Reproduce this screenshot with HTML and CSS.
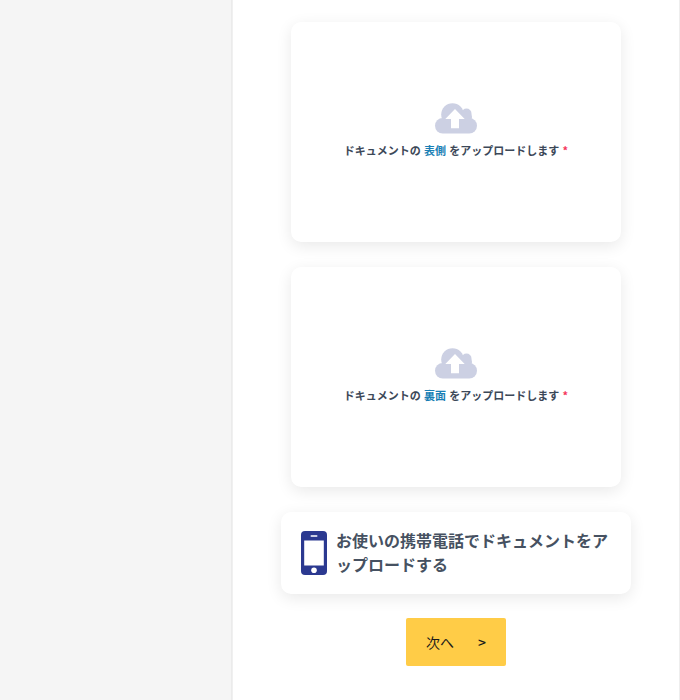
FILE: index.html
```html
<!DOCTYPE html>
<html lang="ja">
<head>
<meta charset="utf-8">
<title>アップロード</title>
<link rel="stylesheet" href="styles.css">
</head>
<body>
<div class="layout">
  <aside class="side"></aside>
  <main class="main">
    <div class="upload-card">
      <svg class="cloud" viewBox="0 0 44 33" aria-hidden="true"><g class="cloud-fill"><circle cx="18.500" cy="12.500" r="11.300"/><circle cx="32.500" cy="11.500" r="5"/><circle cx="32" cy="15" r="6"/><rect x="1" y="16" width="42" height="15.500" rx="7.700"/></g><path class="cloud-arrow" d="M21 7L30.700 17H25V26.300H17V17H11.300Z"/></svg>
      <p class="upload-text">ドキュメントの <span class="accent">表側</span> をアップロードします <span class="req">*</span></p>
    </div>
    <div class="upload-card">
      <svg class="cloud" viewBox="0 0 44 33" aria-hidden="true"><g class="cloud-fill"><circle cx="18.500" cy="12.500" r="11.300"/><circle cx="32.500" cy="11.500" r="5"/><circle cx="32" cy="15" r="6"/><rect x="1" y="16" width="42" height="15.500" rx="7.700"/></g><path class="cloud-arrow" d="M21 7L30.700 17H25V26.300H17V17H11.300Z"/></svg>
      <p class="upload-text">ドキュメントの <span class="accent">裏面</span> をアップロードします <span class="req">*</span></p>
    </div>
    <div class="phone-card">
      <svg class="phone" viewBox="0 0 26 44" aria-hidden="true"><rect class="phone-body" x="0" y="0" width="26" height="44" rx="4"/><rect class="phone-screen" x="3.200" y="9.500" width="19.600" height="25"/><rect class="phone-screen" x="9.500" y="4.300" width="7" height="1.500" rx="0.700"/><circle class="phone-screen" cx="13" cy="39.200" r="2.800"/></svg>
      <p class="phone-text">お使いの携帯電話でドキュメントをアップロードする</p>
    </div>
    <button class="next" type="button"><span>次へ</span><span class="chev">&gt;</span></button>
  </main>
</div>
</body>
</html>
```
FILE: styles.css
```css
* { box-sizing: border-box; }
html, body { margin: 0; height: 100%; overflow: hidden; }
body {
  background: #fff;
  font-family: "Noto Sans CJK JP", "Noto Sans", sans-serif;
  color: #3c4858;
}
.layout { display: flex; height: 700px; width: 680px; }
.side { width: 232px; flex: none; background: #f5f5f5; border-right: 1px solid #ebebeb; }
.main {
  flex: 1;
  background: #fff;
  border-left: 1px solid #f0f0f0;
  border-right: 1px solid #eeeeee;
  display: flex;
  flex-direction: column;
  align-items: center;
  padding-top: 22px;
}
.upload-card {
  width: 330px;
  height: 220px;
  flex: none;
  margin-bottom: 25px;
  background: #fff;
  border-radius: 10px;
  box-shadow: 0 4px 16px rgba(0, 0, 0, 0.09);
  display: flex;
  flex-direction: column;
  align-items: center;
  padding-top: 80px;
}
.cloud { width: 44px; height: 33px; display: block; }
.cloud-fill { fill: #ccd0e3; }
.cloud-arrow { fill: #fff; }
.upload-text {
  margin: 6px 0 0;
  font-size: 11px;
  line-height: 18px;
  font-weight: 700;
  word-spacing: 0.750px;
  color: #3c4858;
}
.accent { color: #1a7fb5; }
.req { color: #f5365c; font-weight: 700; }
.phone-card {
  width: 350px;
  height: 82px;
  flex: none;
  background: #fff;
  border-radius: 10px;
  box-shadow: 0 4px 16px rgba(0, 0, 0, 0.09);
  display: flex;
  align-items: center;
  padding: 0 20px;
  gap: 9px;
}
.phone { width: 26px; height: 44px; flex: none; }
.phone-body { fill: #2b3990; }
.phone-screen { fill: #fff; }
.phone-text {
  margin: 0;
  padding-bottom: 2px;
  font-size: 16px;
  line-height: 24px;
  font-weight: 700;
  line-break: anywhere;
  color: #465161;
}
.next {
  width: 100px;
  height: 48px;
  flex: none;
  margin-top: 24px;
  border: 0;
  border-radius: 2px;
  background: #ffcc47;
  color: #1a1a1a;
  font: 400 14px "Noto Sans CJK JP", "Noto Sans", sans-serif;
  display: flex;
  align-items: center;
  justify-content: space-between;
  padding: 0 20px;
}
.chev { font-weight: 500; }
```
